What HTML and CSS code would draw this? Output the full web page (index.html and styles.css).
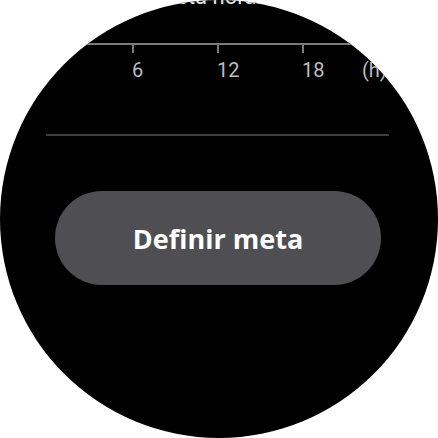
FILE: index.html
```html
<!DOCTYPE html>
<html lang="pt">
<head>
<meta charset="utf-8">
<link rel="stylesheet" href="styles.css">
</head>
<body>
<div class="watch">
  <div class="title">Meta horária</div>
  <div class="chart">
    <div class="axis">
      <div class="col"><div class="tick"></div><div class="label"></div></div>
      <div class="col"><div class="tick"></div><div class="label">6</div></div>
      <div class="col"><div class="tick"></div><div class="label">12</div></div>
      <div class="col col-last"><div class="tick"></div><div class="label">18</div></div>
      <div class="col"><div class="tick tick-none"></div><div class="label">(h)</div></div>
    </div>
  </div>
  <div class="divider"></div>
  <button class="btn">Definir meta</button>
</div>
</body>
</html>
```
FILE: styles.css
```css
html, body {
  margin: 0;
  padding: 0;
  background: #fff;
}
.watch {
  width: 438px;
  height: 438px;
  border-radius: 50%;
  background: #000;
  overflow: hidden;
  display: flex;
  flex-direction: column;
  font-family: Roboto, "Liberation Sans", sans-serif;
}
.title {
  margin-top: -13px;
  height: 20px;
  line-height: 20px;
  font-size: 22px;
  color: #e6e6e6;
  text-align: center;
  white-space: nowrap;
}
.chart {
  margin-top: 36px;
}
.axis {
  display: flex;
  padding-left: 47px;
  border-top: 2px solid #7b7b7b;
}
.col {
  width: 85px;
  flex: none;
}
.col-last {
  width: 60px;
}
.tick {
  width: 2px;
  height: 8px;
  background: #7b7b7b;
}
.tick-none {
  background: transparent;
}
.label {
  margin-top: 7px;
  height: 20px;
  font-size: 20px;
  line-height: 20px;
  color: #bdbdbd;
}
.divider {
  margin-top: 54px;
  margin-left: 46px;
  width: 343px;
  height: 2px;
  background: #3e3e3e;
}
.btn {
  margin-top: 55px;
  margin-left: 55px;
  width: 326px;
  height: 94px;
  border: none;
  border-radius: 47px;
  background: #4f4f53;
  color: #fff;
  font-family: "Open Sans", Roboto, sans-serif;
  font-weight: 700;
  font-size: 27px;
  padding: 0;
}
```
